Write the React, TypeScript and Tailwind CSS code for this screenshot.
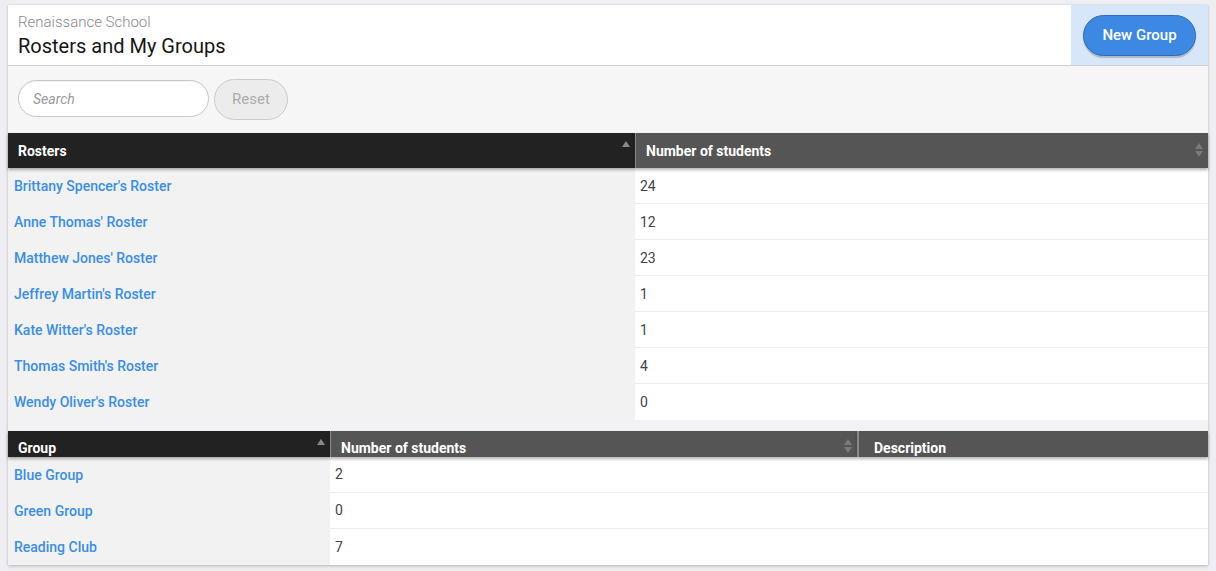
import React from "react";

const rosters = [
  { name: "Brittany Spencer's Roster", count: 24 },
  { name: "Anne Thomas' Roster", count: 12 },
  { name: "Matthew Jones' Roster", count: 23 },
  { name: "Jeffrey Martin's Roster", count: 1 },
  { name: "Kate Witter's Roster", count: 1 },
  { name: "Thomas Smith's Roster", count: 4 },
  { name: "Wendy Oliver's Roster", count: 0 },
];

const groups = [
  { name: "Blue Group", count: 2, description: "" },
  { name: "Green Group", count: 0, description: "" },
  { name: "Reading Club", count: 7, description: "" },
];

const SortUp = () => (
  <svg width="8" height="6" viewBox="0 0 8 6" className="absolute right-[5px] top-[8px]">
    <path d="M4 0 L8 6 L0 6 Z" fill="#8a8a8a" />
  </svg>
);

const SortBoth = ({ top }: { top: string }) => (
  <svg width="8" height="14" viewBox="0 0 8 14" className={`absolute right-[5px] ${top}`}>
    <path d="M4 0 L8 6 L0 6 Z" fill="#7a7a7a" />
    <path d="M0 8 L8 8 L4 14 Z" fill="#7a7a7a" />
  </svg>
);

export default function App() {
  return (
    <div
      className="min-h-[571px] w-full bg-[#efeff3] pt-[5px] pl-[8px]"
      style={{ fontFamily: "Roboto, 'Liberation Sans', sans-serif" }}
    >
      <div className="w-[1200px] bg-white shadow-[0_1px_3px_rgba(0,0,0,0.25)]">
        {/* title bar */}
        <div className="flex h-[61px] border-b border-[#cfcfcf]">
          <div className="flex-1 pl-[10px] pt-[8px]">
            <div className="text-[15px] font-light leading-[18px] text-[#8a8a8a]">Renaissance School</div>
            <div className="mt-[3px] text-[20px] leading-[24px] text-[#151515]">Rosters and My Groups</div>
          </div>
          <div className="flex w-[137px] items-start justify-center bg-[#d7e6f8] pt-[10px]">
            <button className="h-[41px] w-[113px] rounded-full border border-[#2e6db5] bg-[#3d88e3] text-[15px] font-medium text-white shadow-[0_2px_1px_rgba(0,0,0,0.2)]">
              New Group
            </button>
          </div>
        </div>

        {/* toolbar */}
        <div className="flex h-[67px] items-start gap-[5px] bg-[#f6f6f7] pl-[10px] pt-[14px]">
          <div className="flex h-[37px] w-[191px] items-center rounded-full border border-[#c8c8c8] bg-white pl-[14px] shadow-[inset_0_1px_1px_rgba(0,0,0,0.05)]">
            <span className="mt-[1px] text-[14px] italic text-[#9a9a9a]">Search</span>
          </div>
          <button className="-mt-[1px] h-[41px] w-[74px] rounded-full border border-[#cacaca] bg-[#ececec] text-[15px] text-[#ababab]">
            Reset
          </button>
        </div>

        {/* rosters table */}
        <div className="grid grid-cols-[627px_1fr]">
          <div className="relative z-10 flex h-[35px] items-center bg-[#222222] pl-[10px] pt-[1px] text-[14px] font-bold text-white shadow-[0_2px_3px_rgba(0,0,0,0.3)]">
            Rosters
            <SortUp />
          </div>
          <div className="relative z-10 flex h-[35px] items-center border-l border-[#8a8a8a] bg-[#555555] pl-[10px] pt-[1px] text-[14px] font-bold text-white shadow-[0_2px_3px_rgba(0,0,0,0.3)]">
            Number of students
            <SortBoth top="top-[10px]" />
          </div>
          {rosters.map((r, i) => (
            <React.Fragment key={r.name}>
              <div className="flex h-[36px] items-center bg-[#f2f2f3] pl-[6px] pt-[1px] text-[14px] font-medium text-[#3a8ee6]">
                {r.name}
              </div>
              <div
                className={`flex h-[36px] items-center pl-[5px] pt-[1px] text-[14px] text-[#444444] ${
                  i < rosters.length - 1 ? "border-b border-[#ebebf0]" : ""
                }`}
              >
                {r.count}
              </div>
            </React.Fragment>
          ))}
        </div>

        <div className="h-[11px] bg-[#f2f2f5]" />

        {/* groups table */}
        <div className="grid grid-cols-[322px_527px_1fr]">
          <div className="relative z-10 h-[26px] overflow-hidden bg-[#222222] pl-[10px] pt-[10px] text-[14px] font-bold leading-[14px] text-white shadow-[0_2px_3px_rgba(0,0,0,0.3)]">
            Group
            <SortUp />
          </div>
          <div className="relative z-10 h-[26px] overflow-hidden border-l border-[#8a8a8a] bg-[#555555] pl-[10px] pt-[10px] text-[14px] font-bold leading-[14px] text-white shadow-[0_2px_3px_rgba(0,0,0,0.3)]">
            Number of students
            <SortBoth top="top-[8px]" />
          </div>
          <div className="relative z-10 h-[26px] overflow-hidden border-l-2 border-[#8a8a8a] bg-[#555555] pl-[15px] pt-[10px] text-[14px] font-bold leading-[14px] text-white shadow-[0_2px_3px_rgba(0,0,0,0.3)]">
            Description
          </div>
          {groups.map((g, i) => {
            const line = i < groups.length - 1 ? "border-b border-[#ebebf0]" : "";
            return (
              <React.Fragment key={g.name}>
                <div className="flex h-[36px] items-center bg-[#f2f2f3] pl-[6px] text-[14px] font-medium text-[#3a8ee6]">
                  {g.name}
                </div>
                <div className={`flex h-[36px] items-center pl-[5px] text-[14px] text-[#444444] ${line}`}>
                  {g.count}
                </div>
                <div className={`flex h-[36px] items-center pl-[5px] text-[14px] text-[#444444] ${line}`}>
                  {g.description}
                </div>
              </React.Fragment>
            );
          })}
        </div>
      </div>
    </div>
  );
}
